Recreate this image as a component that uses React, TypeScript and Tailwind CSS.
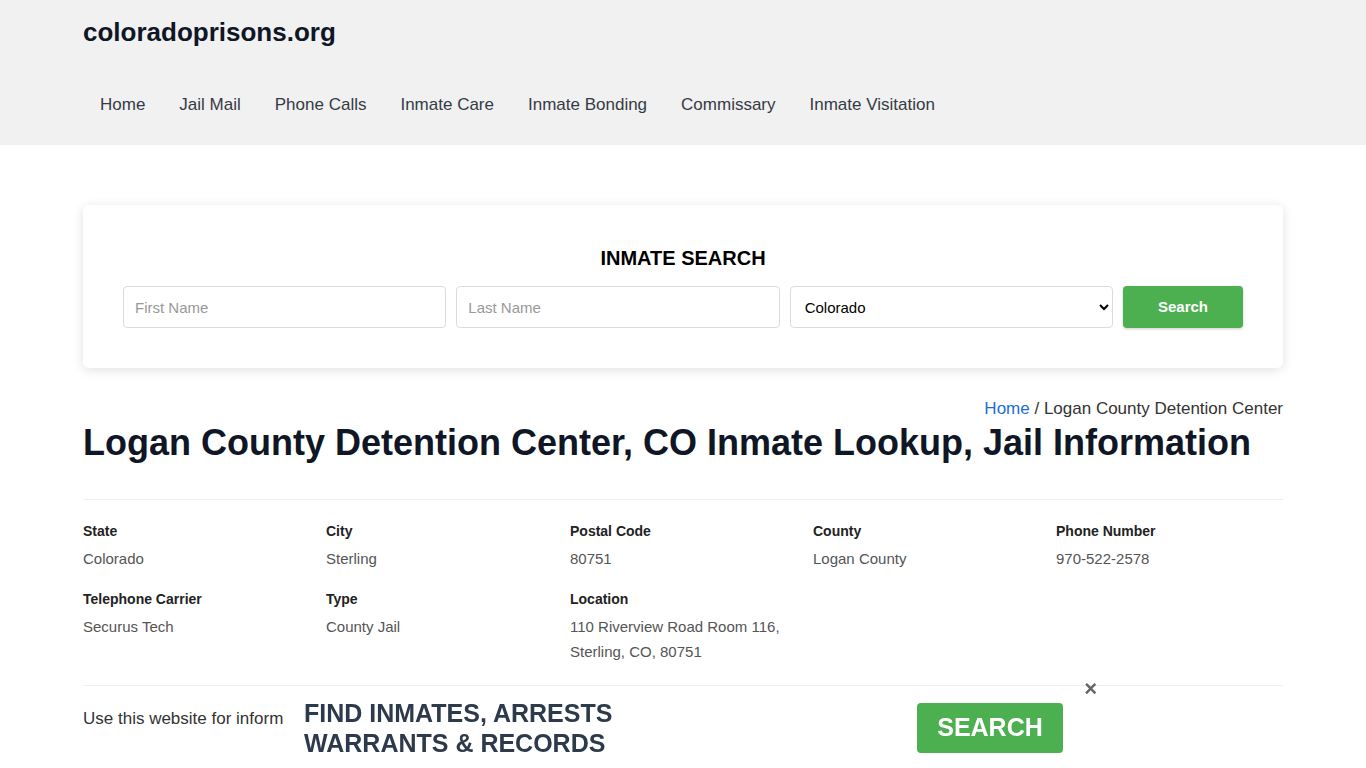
import React from 'react';

const navItems = [
  'Home',
  'Jail Mail',
  'Phone Calls',
  'Inmate Care',
  'Inmate Bonding',
  'Commissary',
  'Inmate Visitation',
];

interface InfoItem {
  label: string;
  value: string[];
}

const infoItems: InfoItem[] = [
  { label: 'State', value: ['Colorado'] },
  { label: 'City', value: ['Sterling'] },
  { label: 'Postal Code', value: ['80751'] },
  { label: 'County', value: ['Logan County'] },
  { label: 'Phone Number', value: ['970-522-2578'] },
  { label: 'Telephone Carrier', value: ['Securus Tech'] },
  { label: 'Type', value: ['County Jail'] },
  { label: 'Location', value: ['110 Riverview Road Room 116,', 'Sterling, CO, 80751'] },
];

const App: React.FC = () => {
  return (
    <div className="min-h-screen bg-white font-['Liberation_Sans',Arial,sans-serif]">
      {/* header */}
      <header className="bg-[#f1f1f1]">
        <div className="mx-auto w-[1200px]">
          <div className="flex h-[64px] items-center">
            <span className="text-[26px] font-bold text-[#0f1626]">coloradoprisons.org</span>
          </div>
          <nav className="flex h-[81px] items-center">
            {navItems.map((item) => (
              <a key={item} href="#" className="px-[17px] text-[17px] text-[#353b45]">
                {item}
              </a>
            ))}
          </nav>
        </div>
      </header>

      <main className="mx-auto w-[1200px] pt-[60px]">
        {/* search card */}
        <div className="rounded-md bg-white px-[40px] pb-[40px] pt-[41px] shadow-[0_2px_12px_rgba(0,0,0,0.12)]">
          <h2 className="text-center text-[20px] font-bold leading-6 text-black">INMATE SEARCH</h2>
          <div className="mt-[16px] grid grid-cols-[1fr_1fr_1fr_120px] gap-[10px]">
            <input
              type="text"
              placeholder="First Name"
              className="h-[42px] w-full rounded border border-[#dcdcdc] px-[11px] text-[15px] text-[#333] placeholder-[#999] outline-none"
            />
            <input
              type="text"
              placeholder="Last Name"
              className="h-[42px] w-full rounded border border-[#dcdcdc] px-[11px] text-[15px] text-[#333] placeholder-[#999] outline-none"
            />
            <select
              defaultValue="Colorado"
              className="h-[42px] w-full rounded border border-[#dcdcdc] bg-white pl-[10px] pr-[4px] text-[15px] text-black outline-none"
            >
              <option>Colorado</option>
            </select>
            <button
              type="button"
              className="h-[42px] w-[120px] rounded bg-[#4caf50] text-[15px] font-bold text-white shadow-[0_1px_3px_rgba(0,0,0,0.2)]"
            >
              Search
            </button>
          </div>
        </div>

        {/* breadcrumb + title */}
        <div className="mt-[29px] text-right text-[17px] leading-6 text-[#333]">
          <a href="#" className="text-[#1a6fd6]">Home</a>
          <span> / Logan County Detention Center</span>
        </div>
        <h1 className="text-[36px] font-bold leading-[44px] text-[#0f1626]">
          Logan County Detention Center, CO Inmate Lookup, Jail Information
        </h1>

        <hr className="mt-[34px] border-t border-[#efefef]" />

        <div className="grid grid-cols-[243px_244px_243px_243px_1fr] gap-y-[18px] pt-[21px]">
          {infoItems.map((item) => (
            <div key={item.label}>
              <div className="text-[14px] font-bold leading-5 text-[#222]">{item.label}</div>
              <div className="mt-[5px] text-[15px] leading-[25px] text-[#555]">
                {item.value.map((line) => (
                  <div key={line}>{line}</div>
                ))}
              </div>
            </div>
          ))}
        </div>

        <hr className="mt-[21px] border-t border-[#efefef]" />

        <p className="mt-[21px] whitespace-nowrap text-[17px] leading-6 text-[#333]">
          Use this website for inform
        </p>
        <div className="h-[200px]" />
      </main>

      {/* bottom ad */}
      <div className="fixed bottom-0 left-[288px] h-[78px] w-[812px] bg-white">
        <div className="relative flex h-full items-start pl-[16px] pt-[8px]">
          <div className="w-[613px] text-[25px] font-bold uppercase leading-[30px] text-[#2d3a4b]">
            Find Inmates, Arrests
            <br />
            Warrants &amp; Records
          </div>
          <button
            type="button"
            className="mt-[5px] h-[50px] w-[146px] rounded bg-[#4caf50] text-[25px] font-bold text-white"
          >
            SEARCH
          </button>
          <span className="absolute right-[3px] top-[-11px] text-[22px] font-bold leading-5 text-[#666]">×</span>
        </div>
      </div>
    </div>
  );
};

export default App;
